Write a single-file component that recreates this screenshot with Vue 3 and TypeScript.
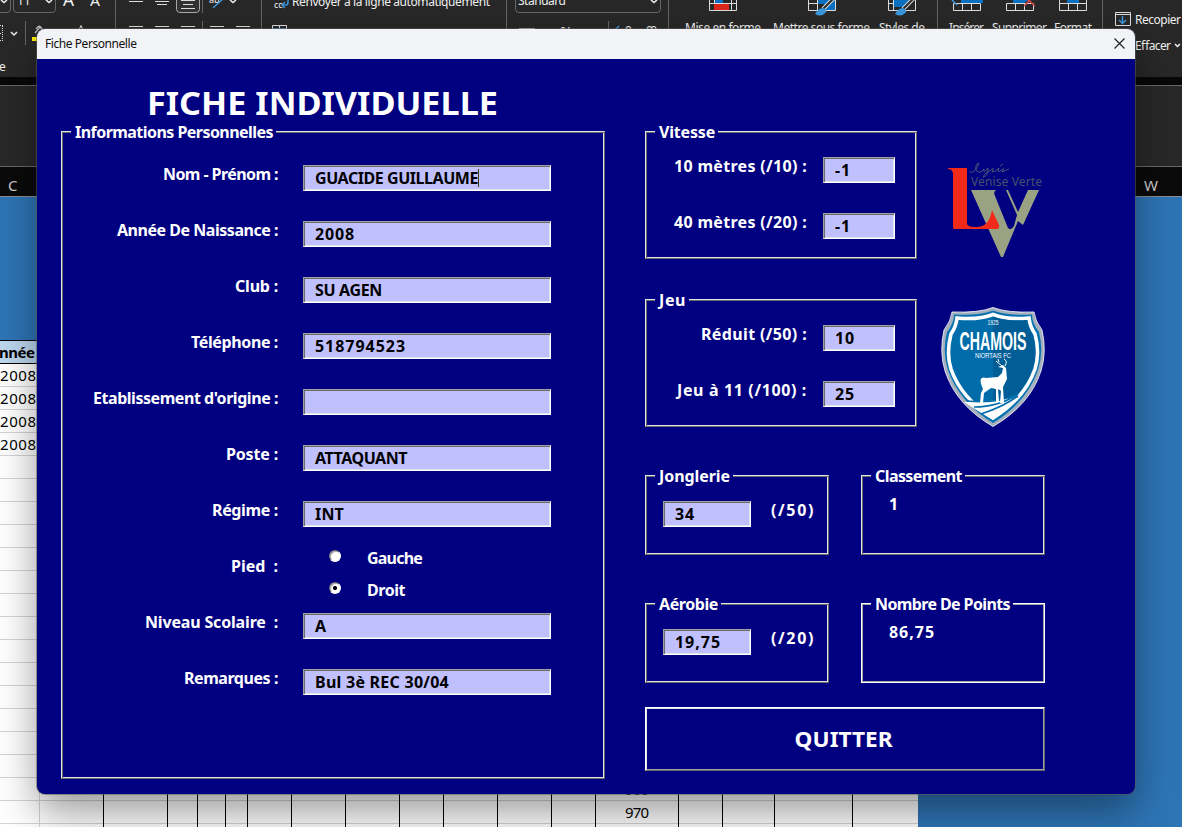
<script setup lang="ts">
import type { Directive } from 'vue'

interface Field {
  label: string
  labelWidth: number
  value: string
  valueWidth: number
  caret?: boolean
}

// Spreads the letters of a text over a given width, or widens them with the stretch modifier.
const vFit: Directive<HTMLElement, number> = {
  mounted(el, { value, modifiers }) {
    const count = (el.textContent ?? '').length
    if (!count || !value) return
    const natural = el.getBoundingClientRect().width
    if (modifiers.stretch) {
      el.style.transform = `scaleX(${value / natural})`
    } else {
      el.style.letterSpacing = `${(value - natural) / count}px`
    }
  },
}

const before: Field[] = [
  { label: 'Nom - Prénom :', labelWidth: 115, value: 'GUACIDE GUILLAUME', valueWidth: 163, caret: true },
  { label: 'Année De Naissance :', labelWidth: 161, value: '2008', valueWidth: 40 },
  { label: 'Club :', labelWidth: 43, value: 'SU AGEN', valueWidth: 67 },
  { label: 'Téléphone :', labelWidth: 87, value: '518794523', valueWidth: 91 },
  { label: "Etablissement d'origine :", labelWidth: 185, value: '', valueWidth: 0 },
  { label: 'Poste :', labelWidth: 52, value: 'ATTAQUANT', valueWidth: 92 },
  { label: 'Régime :', labelWidth: 66, value: 'INT', valueWidth: 29 },
]
const pied = 'Pied  :'
const after: Field[] = [
  { label: 'Niveau Scolaire  :', labelWidth: 133, value: 'A', valueWidth: 11 },
  { label: 'Remarques :', labelWidth: 94, value: 'Bul 3è REC 30/04', valueWidth: 134 },
]
const vitesse: Field[] = [
  { label: '10 mètres (/10) :', labelWidth: 133, value: '-1', valueWidth: 16 },
  { label: '40 mètres (/20) :', labelWidth: 133, value: '-1', valueWidth: 16 },
]
const jeu: Field[] = [
  { label: 'Réduit (/50) :', labelWidth: 106, value: '10', valueWidth: 20 },
  { label: 'Jeu à 11 (/100) :', labelWidth: 130, value: '25', valueWidth: 20 },
]
const columnLines = [103, 167, 197, 225, 247, 291, 345, 399, 443, 497, 551, 595, 678, 722, 774, 852]
const rowLines = Array.from({ length: 20 }, (_, i) => 386 + i * 23)
const separators = [115, 261, 506, 668, 937, 1102]
</script>

<template>
  <div class="screen">
    <svg class="backdrop" width="1182" height="827" viewBox="0 0 1182 827" xml:space="preserve">
      <rect width="1182" height="77" fill="#282828" />
      <rect y="77" width="1182" height="8" fill="#080808" />
      <rect y="85" width="1182" height="82" fill="#282828" />
      <path d="M0 85.5H1182M0 166.5H1182" stroke="#686868" />
      <rect y="167" width="1182" height="29" fill="#0a0a0a" />
      <rect y="197" width="1182" height="630" fill="#2e75b6" />
      <path d="M0 196.5H1182" stroke="#8d8d8d" />

      <g class="ui">
        <g fill="none" stroke="#666">
          <path v-for="x in separators" :key="x" :d="`M${x + 0.5} 0V29`" />
          <path d="M202.5 0V13M202.5 21V29M25.5 21V45M608.5 21V29" />
          <path d="M0 12.5H7Q10.500 12.500 10.500 9V0M13.500 0V9Q13.500 12.500 17 12.500H52Q55.500 12.500 55.500 9V0" />
          <path d="M515.500 0V9Q515.500 12.500 519 12.500H657Q660.500 12.500 660.500 9V0" />
          <path d="M176.500 0V9Q176.500 12.500 180 12.500H196Q199.500 12.500 199.500 9V0" fill="#333" stroke="#aaa" />
        </g>
        <g fill="none" stroke="#eee" stroke-width="1.5">
          <path d="M1 0L4 2.500L7 0M46 0L49 2.500L52 0M230 0L233 2.500L236 0M651 0L654 2.500L657 0M11 32L14 35L17 32M1175 44L1177.500 46.500L1180 44" />
        </g>
        <path d="M129 1.500H143M155 1.500H169M157 4.500H167M181 .5H195M183 4.500H193M181 8.500H195M129 26.500H143M155 26.500H169M181 26.500H195M210 26.500H224M236 26.500H250M519 28.500H535" stroke="#ddd" fill="none" />
        <path d="M0 25.500H3M2.500 26V41M0 33.500H2M0 40.500H3" stroke="#ddd" stroke-dasharray="1 1" />
        <text x="17" y="5" font-size="12" fill="#fff">11</text>
        <text x="63" y="6" font-size="18" textLength="11" lengthAdjust="spacingAndGlyphs">A</text>
        <text x="90" y="6" font-size="15" textLength="10" lengthAdjust="spacingAndGlyphs">A</text>
        <path d="M79 30L81 25.500L83 30" fill="none" stroke="#ddd" />
        <path d="M35 33L40 27L45 32M36 29Q40 23 42 30" fill="none" stroke="#bbb" stroke-width="1.300" />
        <rect x="32" y="37" width="14" height="4" fill="#ffef00" />
        <text x="209" y="3" font-size="9">ab</text>
        <path d="M213 8L225 -3" stroke="#3b96dd" stroke-width="1.500" />
        <text x="274" y="8" font-size="9">cc</text>
        <path d="M283 5H286Q288 5 288 2V0M285 2L282 5L285 8" fill="none" stroke="#3b96dd" stroke-width="1.500" />
        <path d="M272.500 29V25.500H286.500V29M279.500 25V28" fill="none" stroke="#ddd" />
        <path d="M273 28.500H286" stroke="#2f86cc" />
        <text x="292" y="6" textLength="198" fill="#fff">Renvoyer à la ligne automatiquement</text>
        <text x="518" y="5" textLength="48" fill="#fff">Standard</text>
        <text x="560" y="37" font-size="15">%</text>
        <text x="625" y="35">0</text>
        <text x="646" y="35" textLength="11">00</text>
        <path d="M619 26L615 30" stroke="#3b96dd" stroke-width="1.500" />

        <g fill="none" stroke="#ddd">
          <path d="M709.500 -4V10.500H736.500V-4M709 3.500H737M714.500 0V10M731.500 0V10" />
          <path d="M808.500 -4V10.500H835.500V-4M808 3.500H836M817.500 0V10M826.500 0V10" />
          <path d="M888.500 -4V10.500H915.500V-4M888 3.500H893M893.500 0V10" />
          <path d="M953.500 3.500V10.500H980.500V3.500ZM962.500 3V10M971.500 3V10" />
          <path d="M1006.500 3.500V10.500H1033.500V3.500ZM1015.500 3V10M1024.500 3V10" />
          <path d="M1059.500 -4V10.500H1086.500V-4M1059 3.500H1087M1068.500 3V10M1077.500 3V10" />
          <path d="M1115.500 12.500H1130.500V25.500H1115.500ZM1115.500 14.500H1130.500" />
        </g>
        <rect x="715" y="0" width="8" height="3" fill="#0b6fc2" />
        <rect x="714" y="4" width="15" height="6" fill="#d92719" />
        <path d="M818 0H835V10H824V4H818ZM894 0H911L904 7H894ZM961 0H983V3H961ZM1013 0H1029L1024 3H1013ZM1067 0H1079V3H1067Z" fill="#0b6fc2" />
        <path d="M823 9L836 -4M903 9L916 -4" stroke="#ddd" stroke-width="4" />
        <path d="M823 9L836 -4M903 9L916 -4" stroke="#282828" stroke-width="2" />
        <path d="M815 14Q818 8 823 8Q829 11 824 14Q820 17 815 14ZM895 14Q898 8 903 8Q909 11 904 14Q900 17 895 14Z" fill="#3b96dd" />
        <path d="M952 0L957 5" stroke="#3b96dd" stroke-width="1.500" />
        <path d="M1024 6L1034 -4M1025 -3L1035 6" stroke="#d94242" stroke-width="1.500" />
        <path d="M1122.500 16V23M1119 20L1122.500 23.500L1126 20" fill="none" stroke="#3b96dd" stroke-width="1.500" />
        <text x="685" y="32" textLength="76">Mise en forme</text>
        <text x="773" y="32" textLength="97">Mettre sous forme</text>
        <text x="879" y="32" textLength="46">Styles de</text>
        <text x="949" y="32" textLength="35">Insérer</text>
        <text x="992" y="32" textLength="55">Supprimer</text>
        <text x="1054" y="32" textLength="38">Format</text>
        <text x="1135" y="24" textLength="46">Recopier</text>
        <text x="1135" y="50" textLength="36">Effacer</text>
        <text x="-1" y="71">e</text>
      </g>

      <g class="cells">
        <text x="8" y="191" font-size="15" fill="#ccc">C</text>
        <text x="1144" y="191" font-size="15" fill="#ccc">W</text>
        <rect y="340" width="918" height="487" fill="#fff" />
        <rect y="341" width="60" height="22" fill="#bdd7ee" />
        <path d="M0 340.500H60M0 363.500H60" stroke="#000" />
        <path v-for="y in rowLines" :key="y" :d="`M0 ${y + 0.5}H918`" stroke="#d4d4d4" />
        <path d="M39.500 364V827" stroke="#d4d4d4" />
        <path v-for="x in columnLines" :key="x" :d="`M${x + 0.5} 700V827`" stroke="#000" />
        <text x="-1" y="358" font-size="15" font-weight="700" textLength="36">nnée</text>
        <text v-for="i in 4" :key="i" x="0" :y="358 + i * 23" textLength="36">2008</text>
        <text x="625" y="795" font-size="14" textLength="24">960</text>
        <text x="625" y="818" font-size="14" textLength="24">970</text>
      </g>
    </svg>

    <section class="window">
      <header class="titlebar">
        <span v-fit="91.5">Fiche Personnelle</span>
        <svg width="11" height="11" viewBox="0 0 11 11"><path d="M.5 .5L10.500 10.500M10.500 .5L.5 10.500" stroke="#222" stroke-width="1.200" /></svg>
      </header>
      <div class="form">
        <div class="left">
          <h1><span v-fit.stretch="351">FICHE INDIVIDUELLE</span></h1>
          <div class="frame personal">
            <div class="legend"><span v-fit="198">Informations Personnelles</span></div>
            <div class="rows">
              <div v-for="f in before" :key="f.label" class="row">
                <label><span v-fit="f.labelWidth">{{ f.label }}</span></label>
                <div class="input"><span v-fit="f.valueWidth">{{ f.value }}</span><i v-if="f.caret" class="caret"></i></div>
              </div>
              <div class="row">
                <label><span v-fit="47">{{ pied }}</span></label>
                <div class="radios">
                  <div class="option"><i class="radio"></i><span v-fit="55">Gauche</span></div>
                  <div class="option"><i class="radio checked"></i><span v-fit="38">Droit</span></div>
                </div>
              </div>
              <div v-for="f in after" :key="f.label" class="row">
                <label><span v-fit="f.labelWidth">{{ f.label }}</span></label>
                <div class="input"><span v-fit="f.valueWidth">{{ f.value }}</span></div>
              </div>
            </div>
          </div>
        </div>

        <div class="right">
          <div class="band">
            <div class="frame tests">
              <div class="legend"><span v-fit="56">Vitesse</span></div>
              <div class="rows">
                <div v-for="f in vitesse" :key="f.label" class="row">
                  <label><span v-fit="f.labelWidth">{{ f.label }}</span></label>
                  <div class="input"><span v-fit="f.valueWidth">{{ f.value }}</span></div>
                </div>
              </div>
            </div>
            <svg class="lycee" width="104" height="104" viewBox="941 157 104 104">
              <path d="M971 190H996Q993 192 995 196L1008 228Q1011 231 1014 226L1017 215L1006 190H1008L1018 212L1028 190H1039L1023 225L1018 221L1003 257H1001Z" fill="#9aa284" />
              <path d="M948 168H967V224Q968 227 975 227Q989 228 992 210L999 225Q1000 229 996 229H954Q953 229 953 225V173Q952 169 948 169Z" fill="#f12a19" />
              <text x="971" y="186" class="school" textLength="71">Venise Verte</text>
              <path d="M970 172Q975 174 979 163Q975 164 976 170Q980 175 984 169Q983 174 986 170L988 168Q988 177 983 177Q984 173 991 170Q995 166 992 172Q996 172 999 168Q996 174 1002 170Q1005 166 1002 172Q1006 170 1009 169M1000 166L1003 164" fill="none" stroke="#5c6674" stroke-width=".8" />
            </svg>
          </div>
          <div class="band game">
            <div class="frame tests">
              <div class="legend"><span v-fit="27">Jeu</span></div>
              <div class="rows">
                <div v-for="f in jeu" :key="f.label" class="row">
                  <label><span v-fit="f.labelWidth">{{ f.label }}</span></label>
                  <div class="input"><span v-fit="f.valueWidth">{{ f.value }}</span></div>
                </div>
              </div>
            </div>
            <svg class="crest" width="104" height="122" viewBox="941 306 104 122">
              <path d="M993 307.500Q979 313 952 312Q951 321 944 330Q939 352 945 371Q956 405 993 426.500Q1030 405 1041 371Q1047 352 1042 330Q1035 321 1034 312Q1007 313 993 307.500Z" fill="#a5b0bc" stroke="#fff" stroke-width=".8" />
              <path d="M993 310.500Q978 316 954 314.500Q954 323 947 332Q942 352 948 370Q959 402 993 423Q1027 402 1038 370Q1044 352 1039 332Q1032 323 1032 314.500Q1008 316 993 310.500Z" fill="#0873b1" />
              <path d="M993 314.500Q979 320 957 318Q956 327 951 334Q946 353 951 369Q961 398 993 418Q1025 398 1035 369Q1040 353 1035 334Q1030 327 1029 318Q1007 320 993 314.500Z" fill="#006ca9" stroke="#fff" stroke-width="3.600" />
              <path d="M993 316.500V416Q1023 396 1033 368Q1038 352 1033 335Q1028 328 1027 320Q1006 322 993 316.500Z" fill="#005d95" />
              <path d="M964 402Q1003 402 1020 394L1009 408L993 420L978 411Z" fill="#fff" />
              <path d="M974 407Q999 407 1018 394M981 414Q1003 407 1018 396M967 401Q998 404 1017 394" fill="none" stroke="#006ca9" stroke-width="1.600" />
              <path d="M980 403L981 393L983 389L981 384Q979 376 986 378L998 377L1002 373L1003 368L998 367L1003 365L1006 368L1007 379L1003 387L1004 403H1000L1001 391L998 389L999 402H996L996 389L991 388L984 393L983 403Z" fill="#fff" />
              <path d="M1002 366L996 361M999 362L998 359M1005 366Q1008 361 1004 359" fill="none" stroke="#fff" />
              <text x="987.5" y="325" class="crest-year" textLength="11" lengthAdjust="spacingAndGlyphs">1925</text>
              <text x="959.5" y="350" class="club" textLength="67" lengthAdjust="spacingAndGlyphs">CHAMOIS</text>
              <text x="975" y="357.5" class="crest-sub" textLength="36" lengthAdjust="spacingAndGlyphs">NIORTAIS FC</text>
            </svg>
          </div>
          <div class="scores">
            <div class="frame small">
              <div class="legend"><span v-fit="71">Jonglerie</span></div>
              <div class="score"><div class="input"><span v-fit="20">34</span></div><label><span v-fit="44">(/50)</span></label></div>
            </div>
            <div class="frame small">
              <div class="legend"><span v-fit="87">Classement</span></div>
              <div class="result"><span v-fit="11">1</span></div>
            </div>
            <div class="frame small">
              <div class="legend"><span v-fit="59">Aérobie</span></div>
              <div class="score"><div class="input"><span v-fit="46">19,75</span></div><label><span v-fit="44">(/20)</span></label></div>
            </div>
            <div class="frame small bright">
              <div class="legend"><span v-fit="135">Nombre De Points</span></div>
              <div class="result"><span v-fit="46">86,75</span></div>
            </div>
          </div>
          <button class="quit" type="button"><span v-fit.stretch="98">QUITTER</span></button>
        </div>
      </div>
    </section>
  </div>
</template>

<style>
html,
body {
  margin: 0;
  overflow: hidden;
}
</style>

<style scoped>
* {
  box-sizing: border-box;
}
.screen {
  position: relative;
  width: 1182px;
  height: 827px;
  overflow: hidden;
  padding: 29px 0 0 37px;
  font-family: 'Noto Sans', 'Open Sans', sans-serif;
}
.backdrop {
  position: absolute;
  left: 0;
  top: 0;
}
.ui text {
  font-family: 'Noto Sans', sans-serif;
  font-size: 12px;
  fill: #f0f0f0;
}
.ui text[font-size='18'] {
  font-size: 18px;
}
.ui text[font-size='15'] {
  font-size: 15px;
}
.ui text[font-size='9'] {
  font-size: 9px;
}
.cells text {
  font-family: 'Noto Sans', sans-serif;
  font-size: 15px;
}
.window {
  position: relative;
  width: 1098px;
  height: 765px;
  border-radius: 8px;
  overflow: hidden;
  background: #000080;
  box-shadow: 0 0 0 1px rgba(90, 90, 90, 0.55), 0 18px 40px rgba(0, 0, 0, 0.4);
}
.titlebar {
  height: 30px;
  padding: 0 10px 1px 8px;
  display: flex;
  align-items: center;
  justify-content: space-between;
  background: #f1f3f7;
  color: #111;
  font-size: 12px;
}
.form {
  display: flex;
  gap: 40px;
  padding: 0 0 0 24px;
  color: #fff;
  font-size: 16px;
  font-weight: 700;
  white-space: pre;
}
.form span,
.titlebar span {
  display: inline-block;
}
.left {
  width: 544px;
}
h1 {
  margin: 0;
  height: 72px;
  padding: 22px 0 0 86px;
  font-size: 32px;
  line-height: 44px;
}
h1 span {
  transform-origin: 0 50%;
}
.frame {
  border: 1px solid;
  border-color: #e3e3e3 #696969 #696969 #e3e3e3;
  box-shadow: inset 1px 1px 0 #696969, inset -1px -1px 0 #e3e3e3;
}
.frame.bright {
  border-color: #fff;
  box-shadow: inset 1px 1px 0 #a0a0a0, inset -1px -1px 0 #a0a0a0;
}
.legend {
  width: max-content;
  height: 20px;
  line-height: 20px;
  margin: -10px 0 0 9px;
  padding: 0 3px 0 4px;
  background: #000080;
}
.personal {
  height: 648px;
}
.rows {
  display: flex;
  flex-direction: column;
  gap: 30px;
  margin-top: 23px;
}
.row {
  display: flex;
  height: 26px;
}
.row label {
  width: 216px;
  text-align: right;
  line-height: 19px;
}
.input {
  display: flex;
  width: 248px;
  height: 26px;
  padding: 1px 0 0 11px;
  color: #000;
  background: #c0c0ff;
  line-height: 23px;
  border: 1px solid;
  border-color: #a0a0a0 #fff #fff #a0a0a0;
  box-shadow: inset 1px 1px 0 #696969, inset -1px -1px 0 #e3e3e3;
}
.personal .input {
  margin-left: 25px;
}
.caret {
  width: 1px;
  height: 18px;
  margin-top: 2px;
  background: #3f3f00;
}
.radios {
  display: flex;
  flex-direction: column;
  gap: 10px;
  margin: -10px 0 0 51px;
}
.option {
  display: flex;
  height: 22px;
  line-height: 22px;
}
.radio {
  width: 12px;
  height: 12px;
  margin: 3px 26px 0 0;
  border-radius: 50%;
  background: #fff;
  border: 1px solid;
  border-color: #777 #fff #fff #777;
  box-shadow: inset 1px 1px 0 #aaa;
}
.radio.checked {
  background: radial-gradient(circle, #000 0 1.800px, #fff 2.300px);
}
.right {
  width: 400px;
  padding-top: 72px;
}
.band {
  display: flex;
  height: 168px;
  gap: 24px;
}
.band.game {
  height: 176px;
}
.tests {
  width: 272px;
  height: 128px;
  flex: none;
}
.tests .rows {
  margin-top: 15px;
}
.tests .row label {
  width: 161px;
}
.tests .row .input {
  width: 72px;
  margin-left: 16px;
}
.lycee {
  flex: none;
  margin-top: 26px;
}
.crest {
  flex: none;
  margin-top: 7px;
}
.school {
  font: 12px 'Noto Sans', sans-serif;
  fill: #46506c;
}
.club {
  font: 700 25px 'Liberation Sans', sans-serif;
  fill: #fff;
}
.crest-year {
  font: 7px 'Liberation Sans', sans-serif;
  fill: #fff;
}
.crest-sub {
  font: 8px 'Liberation Sans', sans-serif;
  fill: #fff;
}
.scores {
  display: grid;
  grid-template-columns: 184px 184px;
  gap: 48px 32px;
}
.small {
  height: 80px;
}
.score {
  display: flex;
  gap: 20px;
  margin: 15px 0 0 17px;
}
.score .input {
  width: 88px;
}
.score label {
  line-height: 19px;
}
.result {
  margin: 9px 0 0 27px;
  line-height: 18px;
}
.quit {
  display: block;
  width: 400px;
  height: 64px;
  margin-top: 24px;
  padding: 0 2px 2px 0;
  border: 1px solid;
  border-color: #fff #696969 #696969 #fff;
  box-shadow: inset 1px 1px 0 #e3e3e3, inset -1px -1px 0 #a0a0a0;
  background: #000080;
  color: #fff;
  font: 700 22px 'Noto Sans', sans-serif;
}
</style>
